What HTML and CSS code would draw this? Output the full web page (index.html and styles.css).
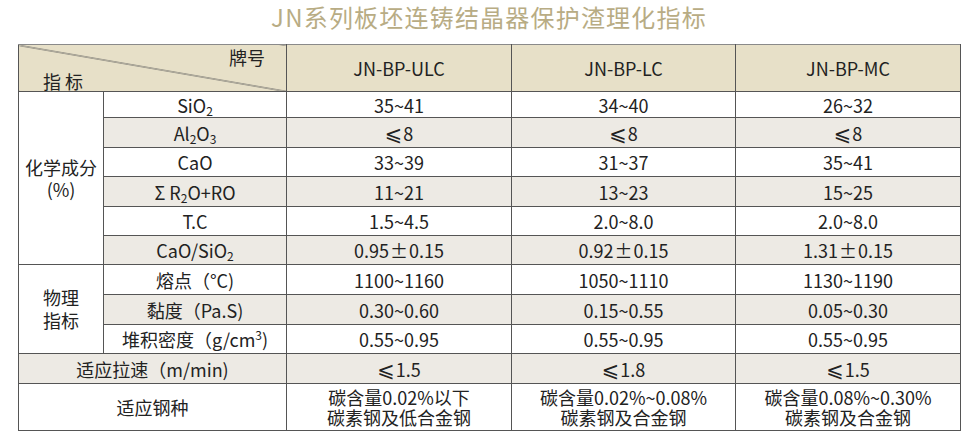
FILE: index.html
```html
<!DOCTYPE html>
<html lang="zh">
<head>
<meta charset="utf-8">
<title>JN系列板坯连铸结晶器保护渣理化指标</title>
<link rel="stylesheet" href="styles.css">
</head>
<body>
<div class="page">
  <h1 class="title">JN系列板坯连铸结晶器保护渣理化指标</h1>
  <table class="spec">
    <colgroup>
      <col class="c1"><col class="c2"><col class="c3"><col class="c4"><col class="c5">
    </colgroup>
    <thead>
      <tr class="head">
        <th colspan="2" class="corner">
          <div class="corner-box"><span class="brand">牌号</span><span class="index">指 标</span></div>
        </th>
        <th>JN-BP-ULC</th>
        <th>JN-BP-LC</th>
        <th>JN-BP-MC</th>
      </tr>
    </thead>
    <tbody>
      <tr class="r26">
        <td rowspan="6" class="group chem">化学成分<br>(%)</td>
        <td>SiO<sub>2</sub></td><td>35~41</td><td>34~40</td><td>26~32</td>
      </tr>
      <tr class="alt r30"><td>Al<sub>2</sub>O<sub>3</sub></td><td><span class="le">⩽</span>8</td><td><span class="le">⩽</span>8</td><td><span class="le">⩽</span>8</td></tr>
      <tr class="r29"><td>CaO</td><td>33~39</td><td>31~37</td><td>35~41</td></tr>
      <tr class="alt r30"><td>Σ R<sub>2</sub>O+RO</td><td>11~21</td><td>13~23</td><td>15~25</td></tr>
      <tr class="r29"><td>T.C</td><td>1.5~4.5</td><td>2.0~8.0</td><td>2.0~8.0</td></tr>
      <tr class="alt r29"><td>CaO/SiO<sub>2</sub></td><td>0.95<span class="pm">±</span>0.15</td><td>0.92<span class="pm">±</span>0.15</td><td>1.31<span class="pm">±</span>0.15</td></tr>
      <tr class="r30">
        <td rowspan="3" class="group phys">物理<br>指标</td>
        <td>熔点（°C)</td><td>1100~1160</td><td>1050~1110</td><td>1130~1190</td>
      </tr>
      <tr class="alt r30"><td>黏度（Pa.S)</td><td>0.30~0.60</td><td>0.15~0.55</td><td>0.05~0.30</td></tr>
      <tr class="r29"><td>堆积密度（g/cm<sup>3</sup>)</td><td>0.55~0.95</td><td>0.55~0.95</td><td>0.55~0.95</td></tr>
      <tr class="alt r30"><td colspan="2">适应拉速（m/min)</td><td><span class="le">⩽</span>1.5</td><td><span class="le">⩽</span>1.8</td><td><span class="le">⩽</span>1.5</td></tr>
      <tr class="r47 steel"><td colspan="2">适应钢种</td><td>碳含量0.02%以下<br>碳素钢及低合金钢</td><td>碳含量0.02%~0.08%<br>碳素钢及合金钢</td><td>碳含量0.08%~0.30%<br>碳素钢及合金钢</td></tr>
    </tbody>
  </table>
</div>
</body>
</html>
```
FILE: styles.css
```css
html, body {
  margin: 0;
  padding: 0;
  background: #ffffff;
}

.page {
  width: 971px;
  font-family: "Noto Sans CJK SC", "Noto Sans", sans-serif;
  color: #222222;
}

.title {
  margin: 0 0 0 18px;
  padding-top: 1px;
  width: 942px;
  height: 43px;
  line-height: 32px;
  text-align: center;
  font-size: 24px;
  font-weight: 400;
  letter-spacing: 1.2px;
  color: #b8ac84;
}

.spec {
  margin-left: 18px;
  width: 942px;
  border-collapse: collapse;
  table-layout: fixed;
  font-size: 18px;
  line-height: 22px;
}

.c1 { width: 85px; }
.c2 { width: 183px; }
.c3 { width: 225px; }
.c4 { width: 224px; }
.c5 { width: 225px; }

.spec th,
.spec td {
  border: 1px solid #555555;
  padding: 0;
  text-align: center;
  vertical-align: middle;
  font-weight: 400;
}

.spec thead th {
  border-top-color: #8a8a8a;
}

.head {
  height: 47px;
  background: #e7e0c8;
}

.corner {
  background: linear-gradient(to top right, transparent calc(50% - 0.8px), #555555 50%, transparent calc(50% + 0.8px));
}

.corner-box {
  height: 46px;
  display: flex;
  flex-direction: column;
  justify-content: space-between;
  padding: 0 21px 0 24px;
  box-sizing: border-box;
}

.brand {
  align-self: flex-end;
  line-height: 24px;
}

.index {
  align-self: flex-start;
  line-height: 24px;
}

.group {
  background: #ffffff;
}

.chem {
  line-height: 22px;
}

.phys {
  line-height: 23px;
}

.alt td {
  background: #edeae4;
}

.r26 { height: 26px; }
.r29 { height: 29px; }
.r30 { height: 30px; }
.r47 { height: 47px; }

.steel td {
  line-height: 20px;
}

sub {
  font-size: 12px;
  vertical-align: -3px;
  line-height: 0;
}

sup {
  font-size: 12px;
  vertical-align: 7px;
  line-height: 0;
}

.le {
  font-family: "DejaVu Sans", sans-serif;
  font-size: 21px;
  line-height: 0;
  margin-right: 1px;
}

.pm {
  font-family: "Noto Sans CJK JP", "Noto Sans CJK SC", sans-serif;
  padding: 0 1px;
}
```
